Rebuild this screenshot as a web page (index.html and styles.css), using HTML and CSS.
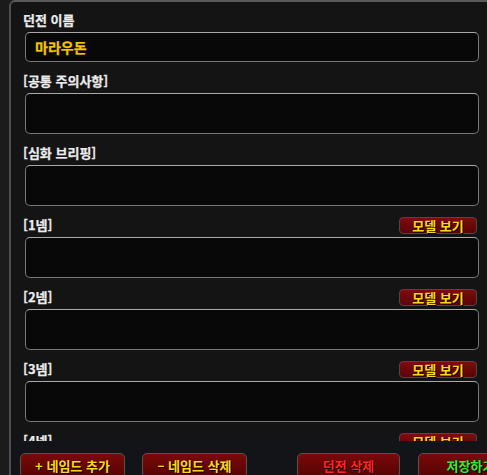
FILE: index.html
```html
<!DOCTYPE html>
<html lang="ko">
<head>
<meta charset="utf-8">
<link rel="stylesheet" href="styles.css">
</head>
<body>
<div class="panel">
  <div class="scroll">
    <div class="field">
      <div class="label-row"><span class="label">던전 이름</span></div>
      <div class="input">마라우돈</div>
    </div>
    <div class="field">
      <div class="label-row"><span class="label">[공통 주의사항]</span></div>
      <div class="area"></div>
    </div>
    <div class="field">
      <div class="label-row"><span class="label">[심화 브리핑]</span></div>
      <div class="area"></div>
    </div>
    <div class="field">
      <div class="label-row"><span class="label">[1넴]</span><span class="model-btn">모델 보기</span></div>
      <div class="area"></div>
    </div>
    <div class="field">
      <div class="label-row"><span class="label">[2넴]</span><span class="model-btn">모델 보기</span></div>
      <div class="area"></div>
    </div>
    <div class="field">
      <div class="label-row"><span class="label">[3넴]</span><span class="model-btn">모델 보기</span></div>
      <div class="area"></div>
    </div>
    <div class="field">
      <div class="label-row"><span class="label">[4넴]</span><span class="model-btn">모델 보기</span></div>
      <div class="area"></div>
    </div>
  </div>
  <div class="footer">
    <span class="btn add">+ 네임드 추가</span>
    <span class="btn remove">– 네임드 삭제</span>
    <span class="btn danger">던전 삭제</span>
    <span class="btn save">저장하기</span>
  </div>
</div>
</body>
</html>
```
FILE: styles.css
```css
html, body {
  margin: 0;
  padding: 0;
  background: #1b1b1b;
  height: 475px;
  overflow: hidden;
  font-family: "Noto Sans CJK KR", "Noto Sans", sans-serif;
}

.panel {
  margin-left: 9px;
  height: 473px;
  border-left: 2px solid #4e4e4e;
  border-top: 2px solid #5a5a5a;
  border-top-left-radius: 6px;
  background: #141414;
  display: flex;
  flex-direction: column;
  overflow: hidden;
}

.scroll {
  height: 429px;
  flex: none;
  overflow: hidden;
  padding: 10px 8px 0 12px;
  display: flex;
  flex-direction: column;
  gap: 11px;
}

.field {
  display: flex;
  flex-direction: column;
  gap: 4px;
  flex: none;
}

.label-row {
  height: 16px;
  display: flex;
  align-items: center;
  justify-content: space-between;
}

.label {
  color: #ececec;
  font-size: 13px;
  font-weight: 700;
  line-height: 16px;
  -webkit-text-stroke: 0.25px #ececec;
}

.input,
.area {
  margin-left: 2px;
  background: #080808;
  border: 1px solid #787878;
  border-top-color: #a8a8a8;
  border-radius: 5px;
  box-sizing: border-box;
}

.input {
  height: 30px;
  display: flex;
  align-items: center;
  padding-left: 9px;
  color: #f7c600;
  font-size: 14px;
  font-weight: 700;
  -webkit-text-stroke: 0.25px #f7c600;
}

.area {
  height: 41px;
}

.model-btn {
  box-sizing: border-box;
  width: 78px;
  height: 17px;
  margin-right: 2px;
  border: 1px solid #4a4a4a;
  border-radius: 4px;
  background: linear-gradient(#7e0c0c, #5a0404);
  color: #ffd814;
  font-size: 13px;
  font-weight: 700;
  line-height: 15px;
  text-align: center;
  text-shadow: 1px 1px 0 #000;
}

.footer {
  flex: 1;
  display: flex;
  align-items: flex-start;
  padding-top: 12px;
  padding-left: 9px;
  background: #121417;
  white-space: nowrap;
}

.btn {
  flex: none;
  box-sizing: border-box;
  width: 105px;
  height: 25px;
  border: 1px solid #555;
  border-radius: 5px;
  background: linear-gradient(#7a0a0a, #560303);
  font-size: 13px;
  font-weight: 700;
  line-height: 23px;
  text-align: center;
  text-shadow: 1px 1px 0 #000;
  color: #ffd814;
}

.add { margin-right: 17px; }
.remove { margin-right: 50px; }
.danger { margin-right: 18px; width: 103px; color: #ff2424; }
.save { color: #2cf02c; }
```
